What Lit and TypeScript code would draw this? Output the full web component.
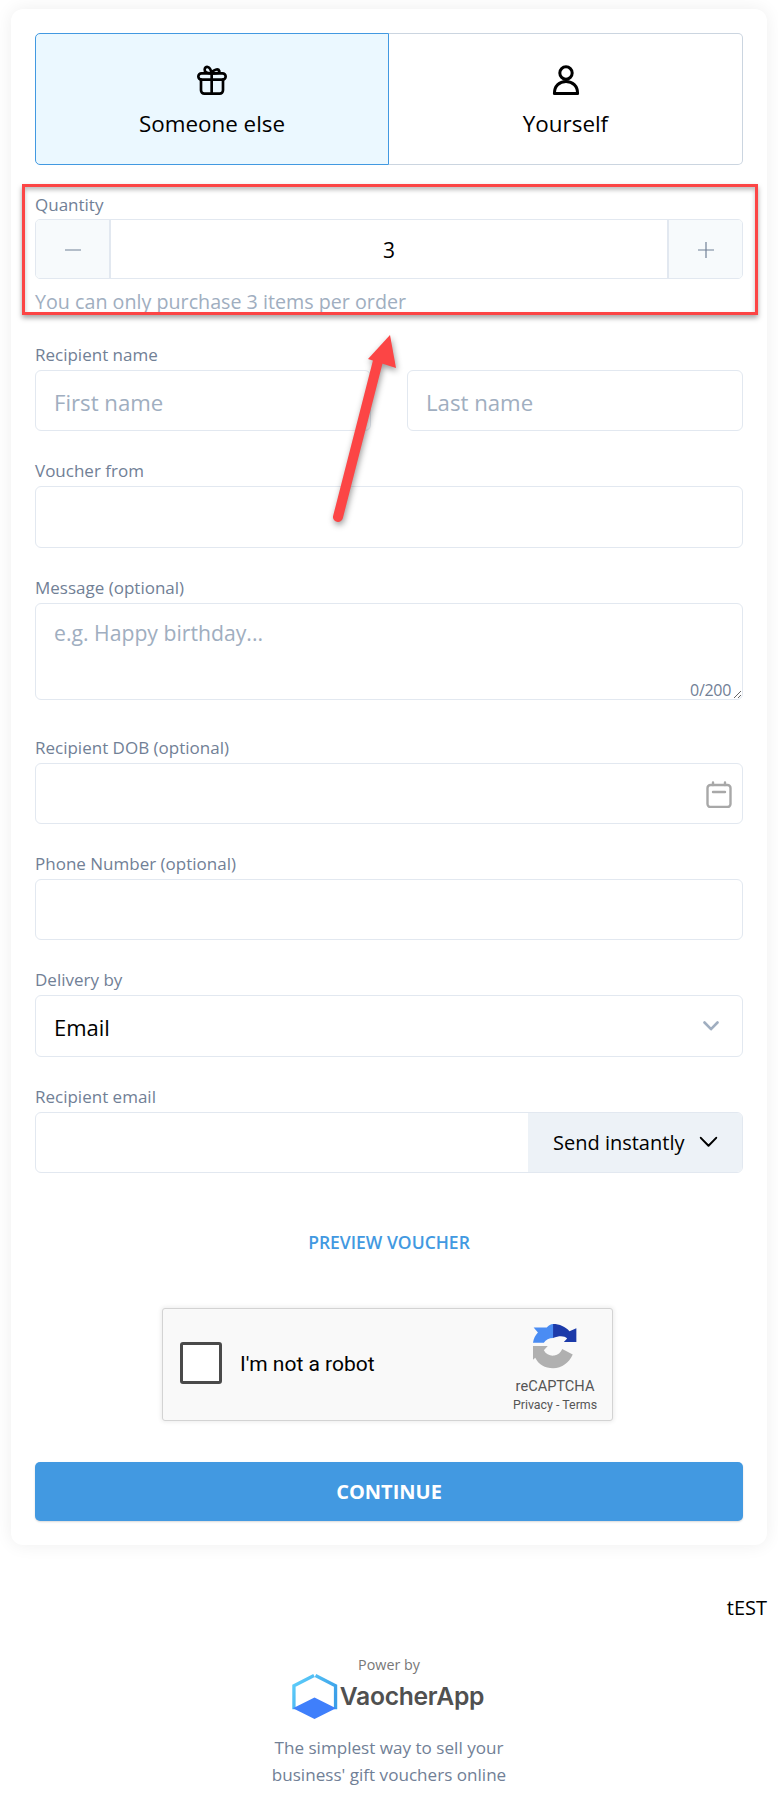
import { LitElement, html, css } from "lit";
import { customElement } from "lit/decorators.js";

const chev = (cls: string) => html`<svg class=${cls} viewBox="0 0 16 10" fill="none"><path d="M1.5 1.5 8 8.2l6.5-6.7" stroke="currentColor" stroke-linecap="round" stroke-linejoin="round"/></svg>`;

@customElement("app-root")
export class AppRoot extends LitElement {
  static styles = css`
    :host { display: block; position: relative; width: 778px; height: 1802px; background: #fff; font-family: "Open Sans", "Noto Sans", sans-serif; color: #000; overflow: hidden; }
    * { box-sizing: border-box; }
    .page { padding: 9px 11px 0; }
    .card { background: #fff; border-radius: 12px; padding: 24px; box-shadow: 0 0 18px rgba(0,0,0,.07); height: 1536px; }
    .toggle { display: flex; height: 132px; }
    .opt { flex: 1; display: flex; flex-direction: column; align-items: center; padding-top: 31px; border: 1px solid #cbd5e0; border-left: 0; border-radius: 0 5px 5px 0; font-size: 22.4px; line-height: 30px; }
    .opt.on { flex: 0 0 354px; background: #ebf8ff; border: 1px solid #4299e1; border-radius: 5px 0 0 5px; }
    .opt svg { width: 30px; height: 30px; margin-bottom: 14px; display: block; }
    .qty { margin-top: 28px; }
    .label { display: block; font-size: 17px; line-height: 24px; color: #718096; margin-bottom: 3px; }
    .qty .label { margin-bottom: 2px; }
    .stepper { display: flex; height: 60px; border: 1px solid #e2e8f0; border-radius: 5px; overflow: hidden; }
    .step { width: 75px; flex: none; background: #f7fafc; display: flex; align-items: center; justify-content: center; color: #718096; padding-top: 2px; }
    .step:first-child { border-right: 2px solid #e2e8f0; }
    .step:last-child { border-left: 2px solid #e2e8f0; }
    .step svg { width: 18px; height: 18px; }
    .val { flex: 1; text-align: center; font-size: 21px; line-height: 60px; }
    .help { font-size: 19.7px; line-height: 27px; color: #a0aec0; margin-top: 9px; margin-bottom: 28px; white-space: nowrap; }
    .field { margin-bottom: 28px; }
    .field.tall { margin-bottom: 36px; }
    .field.last { margin-bottom: 0; }
    .names { display: grid; grid-template-columns: 1fr 1fr; column-gap: 36px; }
    input, textarea { display: block; width: 100%; height: 61.33px; border: 1px solid #e2e8f0; border-radius: 6px; padding: 3px 18px 0; font: inherit; font-size: 22.2px; color: #000; background: #fff; outline: 0; margin: 0; }
    input::placeholder, textarea::placeholder { color: #a0aec0; opacity: 1; }
    textarea { height: 97px; padding-top: 14px; font-size: 21.2px; line-height: 30px; resize: vertical; }
    .wrap { position: relative; }
    .count { position: absolute; right: 12px; bottom: 0; font-size: 16px; line-height: 20px; color: #718096; letter-spacing: -0.3px; }
    .cal { position: absolute; right: 11px; top: 18px; width: 26px; height: 27px; color: #a8a8a8; }
    .select { height: 61.33px; border: 1px solid #e2e8f0; border-radius: 6px; display: flex; align-items: center; justify-content: space-between; padding: 3px 23px 0 18px; font-size: 22px; }
    .sel-chev { width: 16px; height: 10px; color: #a0aec0; stroke-width: 2.6; margin-top: -3px; }
    .emailrow { display: flex; height: 61.33px; border: 1px solid #e2e8f0; border-radius: 6px; overflow: hidden; }
    .emailrow .blank { flex: 1; }
    .send { width: 214px; flex: none; background: #edf2f7; display: flex; align-items: center; padding: 1px 0 0 25px; font-size: 20px; gap: 15px; }
    .send-chev { width: 19px; height: 12px; stroke-width: 1.7; margin-top: -2px; }
    .preview { text-align: center; color: #4299e1; font-weight: 600; font-size: 17.5px; line-height: 24px; margin-top: 57px; }
    .captcha { margin: 54px 0 0 127px; width: 451px; height: 113px; background: #f9f9f9; border: 1px solid #d3d3d3; border-radius: 3px; box-shadow: 0 0 4px 1px rgba(0,0,0,.08); display: flex; font-family: Roboto, sans-serif; position: relative; }
    .box { width: 42px; height: 42px; background: #fff; border: 3px solid #4a4a4a; border-radius: 3px; margin: 33px 0 0 17px; flex: none; }
    .robot { font-size: 21px; color: #000; margin: 43px 0 0 18px; line-height: 24px; }
    .rc { position: absolute; right: 14px; top: 14px; width: 86px; text-align: center; color: #555; }
    .rc svg { display: block; width: 46px; height: 46px; margin: 0 auto; }
    .rc .n { font-size: 14.6px; line-height: 18px; margin-top: 8px; }
    .rc .p { font-size: 12.4px; line-height: 16px; margin-top: 2px; white-space: nowrap; }
    .continue { margin-top: 41px; height: 59px; background: #4299e1; color: #fff; font-weight: 700; font-size: 20px; display: flex; align-items: center; justify-content: center; border-radius: 5px; box-shadow: 0 1px 2px rgba(0,0,0,.15); }
    .test { text-align: right; font-size: 20px; line-height: 28px; margin-top: 49px; }
    .foot { text-align: center; color: #718096; margin-top: 33px; }
    .power { font-size: 14.3px; line-height: 20px; color: #777; }
    .brand { display: flex; align-items: center; justify-content: center; gap: 2px; margin-top: -3px; height: 48px; padding-right: 3px; }
    .brand svg { width: 47px; height: 47px; flex: none; }
    .brand span { font-size: 24.7px; font-weight: 600; color: #505050; letter-spacing: -0.3px; font-family: Inter, sans-serif; }
    .tag { font-size: 17.1px; line-height: 27px; margin-top: 14px; }
    .redbox { position: absolute; left: 22px; top: 184px; width: 736px; height: 131px; border: 3px solid #fc4545; box-shadow: 0 3px 5px rgba(0,0,0,.35), inset 0 3px 4px rgba(0,0,0,.25); pointer-events: none; }
    .arrow { position: absolute; left: 320px; top: 325px; width: 100px; height: 205px; overflow: visible; pointer-events: none; filter: drop-shadow(1px 3px 3px rgba(0,0,0,.4)); }
  `;

  render() {
    return html`
      <div class="page">
        <div class="card">
          <div class="toggle">
            <div class="opt on">
              <svg viewBox="0 0 90 90" fill="none" stroke="#000" stroke-width="8" stroke-linecap="round" stroke-linejoin="round">
                <rect x="4" y="25" width="82" height="19" rx="9.5"/>
                <path d="M12 44v32a10 10 0 0 0 10 10h46a10 10 0 0 0 10-10V44M44 25v61"/>
                <path d="M44 25c-14 1-22-4-21-12 1-10 16-13 21 12zM44 25c4-12 20-15 23-7 2 6-8 8-23 7z"/>
              </svg>
              Someone else
            </div>
            <div class="opt">
              <svg viewBox="0 0 30 30" fill="none" stroke="#000" stroke-width="3" stroke-linejoin="round">
                <circle cx="15" cy="8" r="6.2"/>
                <path d="M3.400 28.400c0-7.500 5-12 11.600-12s11.600 4.500 11.600 12z"/>
              </svg>
              Yourself
            </div>
          </div>

          <div class="qty">
            <div class="label">Quantity</div>
            <div class="stepper">
              <div class="step"><svg viewBox="0 0 18 18" stroke="currentColor" stroke-width="1.2"><path d="M1 9h16"/></svg></div>
              <div class="val">3</div>
              <div class="step"><svg viewBox="0 0 18 18" stroke="currentColor" stroke-width="1.2" fill="none"><path d="M1 9h16M9 1v16"/></svg></div>
            </div>
            <div class="help">You can only purchase 3 items per order</div>
          </div>

          <div class="field">
            <div class="label">Recipient name</div>
            <div class="names">
              <input placeholder="First name" />
              <input placeholder="Last name" />
            </div>
          </div>

          <div class="field">
            <div class="label">Voucher from</div>
            <input />
          </div>

          <div class="field tall">
            <div class="label">Message (optional)</div>
            <div class="wrap">
              <textarea placeholder="e.g. Happy birthday..."></textarea>
              <div class="count">0/200</div>
            </div>
          </div>

          <div class="field">
            <div class="label">Recipient DOB (optional)</div>
            <div class="wrap">
              <input />
              <svg class="cal" viewBox="0 0 26 27" fill="none" stroke="currentColor" stroke-width="2.400" stroke-linecap="round" stroke-linejoin="round">
                <rect x="1.500" y="4" width="23" height="22" rx="3"/>
                <path d="M7 1.500V4M19 1.500V4M7 11h12"/>
              </svg>
            </div>
          </div>

          <div class="field">
            <div class="label">Phone Number (optional)</div>
            <input />
          </div>

          <div class="field">
            <div class="label">Delivery by</div>
            <div class="select">Email ${chev("sel-chev")}</div>
          </div>

          <div class="field last">
            <div class="label">Recipient email</div>
            <div class="emailrow">
              <div class="blank"></div>
              <div class="send">Send instantly ${chev("send-chev")}</div>
            </div>
          </div>

          <div class="preview">PREVIEW VOUCHER</div>

          <div class="captcha">
            <div class="box"></div>
            <div class="robot">I'm not a robot</div>
            <div class="rc">
              <svg viewBox="24 12 140 140">
                <path fill="#1c3aa9" d="M88 15c20 0 38 8 50 22l21-9v42h-38l10-11c-8-8-24-9-43-1z"/>
                <path fill="#4a8cf3" d="M88 15v43c-12 0-22 5-28 14H27c2-12 7-23 15-31L29 26h40c6-7 12-11 19-11z"/>
                <path fill="#b0b0b0" d="M27 82h45L60 95c7 13 20 18 32 16 11-2 19-9 24-20l32 17c-10 24-33 42-60 42-24 0-45-12-54-32l-7 6z"/>
              </svg>
              <div class="n">reCAPTCHA</div>
              <div class="p">Privacy - Terms</div>
            </div>
          </div>

          <div class="continue">CONTINUE</div>
        </div>

        <div class="test">tEST</div>
      </div>

      <div class="foot">
        <div class="power">Power by</div>
        <div class="brand">
          <svg viewBox="0 0 48 48" fill="none">
            <defs>
              <linearGradient id="hx" x1="0" y1="0" x2="1" y2="0.6">
                <stop offset="0" stop-color="#5fd0fb"/>
                <stop offset="1" stop-color="#3b9fe8"/>
              </linearGradient>
            </defs>
            <path d="M23.500 2.500 3 13v24M25 2.500 45.500 13v24" stroke="url(#hx)" stroke-width="3.400"/>
            <path d="M24 25 46 36 24 47 2 36z" fill="#3f7ffb"/>
          </svg>
          <span>VaocherApp</span>
        </div>
        <div class="tag">The simplest way to sell your<br />business' gift vouchers online</div>
      </div>

      <div class="redbox"></div>
      <svg class="arrow" viewBox="0 0 100 205" fill="none">
        <path d="M18 192 59 32" stroke="#fc4545" stroke-width="10" stroke-linecap="round"/>
        <path d="M70 10 48 34 76 43z" fill="#fc4545"/>
      </svg>
    `;
  }
}
